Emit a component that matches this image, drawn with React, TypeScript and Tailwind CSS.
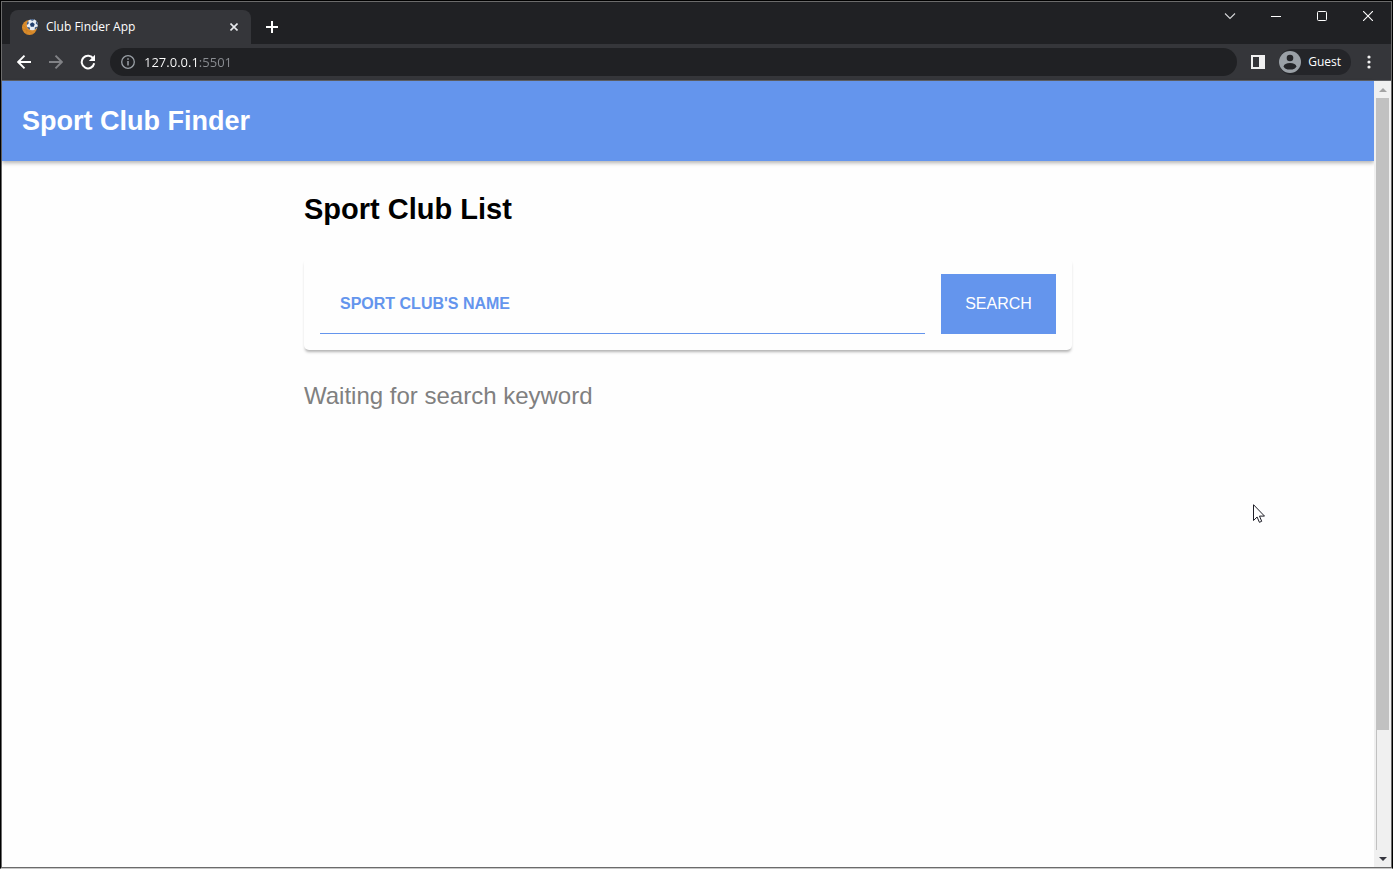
import { useState } from "react";

function FavIcon() {
  return (
    <svg viewBox="0 0 16 16" className="size-4 shrink-0" aria-hidden="true">
      <circle cx="7.5" cy="8.5" r="7.5" fill="#d98b2b" />
      <path d="M1 6.5C4 8 5.500 12 4.500 15M0.500 10C5 11 9 13 11 15" stroke="#c47a22" strokeWidth="0.6" fill="none" />
      <circle cx="10.300" cy="5.700" r="5.600" fill="#e8edf5" />
      <path d="M10.300 3.300l2.400 1.700-.9 2.800H8.800l-.9-2.800z" fill="#22406f" />
      <path d="M8.500.6l1.800.9L12 .6zM14.500 2.500l-.3 2 1.500 1.200zM13 10.300l.2-1.800 1.900-.4zM7.500 10.400V8.700l-2-.3zM6 2.500l.4 2-1.500 1z" fill="#22406f" stroke="#22406f" strokeWidth="0.5" />
    </svg>
  );
}

function TabStrip() {
  return (
    <div className="flex h-[42px] shrink-0 bg-[#202124] pl-2 text-white">
      <div className="mt-2 flex w-[241px] items-center gap-2 rounded-t-lg bg-[#35363a] pl-3 pr-[9px]">
        <FavIcon />
        <span className="grow text-xs">Club Finder App</span>
        <button type="button" aria-label="Close tab" className="flex size-4 items-center justify-center">
          <svg viewBox="0 0 8 8" className="size-2"><path d="M.5.5l7 7M7.500.5l-7 7" stroke="#e8eaed" strokeWidth="1.600" /></svg>
        </button>
      </div>
      <button type="button" aria-label="New tab" className="mt-2 flex w-[41px] items-center justify-center">
        <svg viewBox="0 0 12 12" className="size-3"><path d="M6 0v12M0 6h12" stroke="#fff" strokeWidth="2" /></svg>
      </button>
      <div className="ml-auto flex h-7 items-center">
        <button type="button" aria-label="Search tabs" className="flex w-[46px] justify-center">
          <svg viewBox="0 0 12 12" className="size-3" fill="none"><path d="M1 3.500l5 5 5-5" stroke="#d5d6d8" strokeWidth="1.100" /></svg>
        </button>
        <button type="button" aria-label="Minimize" className="flex w-[46px] justify-center">
          <svg viewBox="0 0 10 10" className="size-[10px]"><path d="M0 5.500h10" stroke="#fff" /></svg>
        </button>
        <button type="button" aria-label="Maximize" className="flex w-[46px] justify-center">
          <svg viewBox="0 0 10 10" className="size-[10px]"><rect x=".5" y=".5" width="9" height="9" rx="1" fill="none" stroke="#fff" /></svg>
        </button>
        <button type="button" aria-label="Close window" className="flex w-[46px] justify-center">
          <svg viewBox="0 0 10 10" className="size-[10px]"><path d="M0 0l10 10M10 0L0 10" stroke="#fff" strokeWidth="1.100" /></svg>
        </button>
      </div>
    </div>
  );
}

function Toolbar() {
  return (
    <div className="flex h-9 shrink-0 items-center bg-[#35363a] pl-1 pr-3 text-xs text-white">
      <button type="button" aria-label="Back" className="flex w-8 shrink-0 justify-center pl-1">
        <svg viewBox="0 0 14 14" className="size-[14px]" fill="none"><path d="M14 7H1.500M7.500 .7L1.200 7l6.300 6.300" stroke="#fff" strokeWidth="1.900" /></svg>
      </button>
      <button type="button" aria-label="Forward" className="flex w-8 shrink-0 justify-center pl-1">
        <svg viewBox="0 0 14 14" className="size-[14px]" fill="none"><path d="M0 7h12.500M6.500 .7L12.800 7l-6.300 6.300" stroke="#818286" strokeWidth="1.900" /></svg>
      </button>
      <button type="button" aria-label="Reload" className="flex w-8 shrink-0 justify-center pl-1">
        <svg viewBox="0 0 16 16" className="size-4" fill="none">
          <path d="M13.400 4.800A6.300 6.300 0 1 0 14.200 9.300" stroke="#fff" strokeWidth="2" />
          <path d="M15 0.800v6.200H8.800z" fill="#fff" />
        </svg>
      </button>
      <div className="ml-2 flex h-7 min-w-0 grow items-center rounded-full bg-[#202124] pl-[11px] pr-4">
        <svg viewBox="0 0 14 14" className="mr-[9px] size-[14px] shrink-0" fill="none" aria-hidden="true">
          <circle cx="7" cy="7" r="6.300" stroke="#9aa0a6" strokeWidth="1.300" />
          <path d="M7 6v4.500M7 3.300v1.500" stroke="#9aa0a6" strokeWidth="1.500" />
        </svg>
        <input
          type="text"
          aria-label="Address"
          defaultValue="127.0.0.1:5501"
          className="h-5 min-w-0 grow bg-[linear-gradient(to_right,#fff_55px,#8a8d92_55px)] bg-clip-text text-[13px] text-transparent outline-none"
        />
      </div>
      <button type="button" aria-label="Side panel" className="ml-[14px] shrink-0">
        <svg viewBox="0 0 14 14" className="size-[14px]"><path d="M0 0h14v14H0zM2 2v10h6V2z" fill="#f1f1f1" fillRule="evenodd" /></svg>
      </button>
      <button type="button" className="ml-[14px] flex h-[26px] shrink-0 items-center gap-[7px] rounded-full bg-[#242529] pr-[10px]">
        <svg viewBox="0 0 22 22" className="size-[22px]" aria-hidden="true">
          <circle cx="11" cy="11" r="11" fill="#9aa0a6" />
          <circle cx="11" cy="7" r="3.300" fill="#242529" />
          <ellipse cx="11" cy="15.300" rx="6.300" ry="3.300" fill="#242529" />
        </svg>
        Guest
      </button>
      <button type="button" aria-label="Menu" className="ml-2 flex w-5 shrink-0 justify-center">
        <svg viewBox="0 0 4 14" className="h-[14px] w-1" fill="#f1f1f1"><circle cx="2" cy="2" r="1.600" /><circle cx="2" cy="7" r="1.600" /><circle cx="2" cy="12" r="1.600" /></svg>
      </button>
    </div>
  );
}

function ScrollBar() {
  return (
    <div className="flex w-[17px] shrink-0 flex-col bg-[#f0f0f0]" aria-hidden="true">
      <div className="flex h-[17px] shrink-0 items-center justify-center">
        <svg viewBox="0 0 8 4" className="h-1 w-2"><path d="M0 4l4-4 4 4z" fill="#a3a3a3" /></svg>
      </div>
      <div className="flex min-h-0 grow flex-col px-[2px]">
        <div className="h-[84%] bg-[#c1c1c1]" />
        <div className="grow border-l border-[#c1c1c1]" />
      </div>
      <div className="flex h-[17px] shrink-0 items-center justify-center">
        <svg viewBox="0 0 8 4" className="h-1 w-2"><path d="M0 0l4 4 4-4z" fill="#35363f" /></svg>
      </div>
    </div>
  );
}

function SearchBar() {
  const [keyword, setKeyword] = useState("");
  return (
    <form
      onSubmit={(e) => e.preventDefault()}
      className="flex gap-4 rounded-[5px] p-4 shadow-[0_3px_3px_-1px_rgba(0,0,0,0.3)]"
    >
      <input
        type="search"
        aria-label="Sport club's name"
        placeholder="SPORT CLUB'S NAME"
        value={keyword}
        onChange={(e) => setKeyword(e.target.value)}
        className="h-[60px] min-w-0 grow border-b border-[#6495ed] px-5 text-base font-bold text-[#6495ed] outline-none placeholder:text-[#6495ed]"
      />
      <button type="submit" className="h-[60px] w-[115px] bg-[#6495ed] text-base text-white">SEARCH</button>
    </form>
  );
}

export default function App() {
  return (
    <div className="relative flex h-screen flex-col border border-black border-b-[#c8c8c8] font-['Open_Sans',sans-serif]">
      <div className="flex min-h-0 grow flex-col border border-[#6b6b6b]">
        <TabStrip />
        <Toolbar />
        <div className="flex min-h-0 grow border-t border-[#5f6064] bg-[#fefefe]">
          <div className="min-w-0 grow font-['Liberation_Sans',sans-serif]">
            <header className="flex h-20 items-center bg-[#6495ed] px-5 shadow-[0_2px_4px_rgba(0,0,0,0.3)]">
              <h1 className="text-[27px] font-bold text-white">Sport Club Finder</h1>
            </header>
            <main className="mx-auto max-w-3xl pt-7">
              <h2 className="mb-[29px] text-[29px] leading-10 font-bold text-black">Sport Club List</h2>
              <SearchBar />
              <p className="mt-[30px] text-2xl text-[#808080]">Waiting for search keyword</p>
            </main>
          </div>
          <ScrollBar />
        </div>
      </div>
      <svg viewBox="0 0 12 19" className="pointer-events-none absolute left-[1252px] top-[503px] h-[19px] w-3" aria-hidden="true">
        <path d="M.5.700v15.800l3.600-3.500 2.300 5.300 2.300-1-2.200-5.200h5z" fill="#fff" stroke="#1d1d26" />
      </svg>
    </div>
  );
}
